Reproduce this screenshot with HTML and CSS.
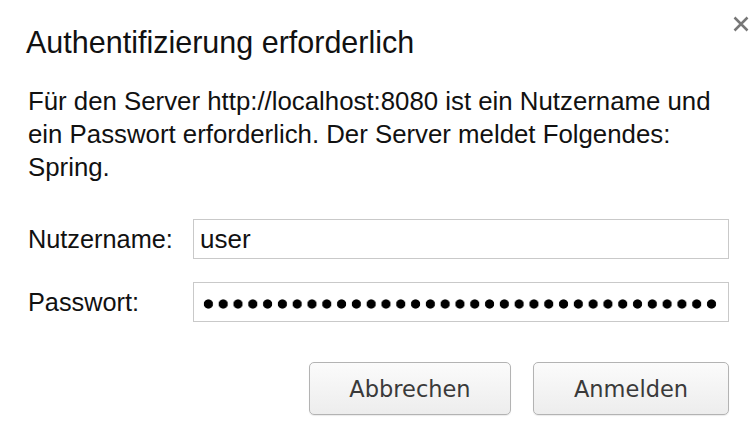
FILE: index.html
```html
<!DOCTYPE html>
<html lang="de">
<head>
<meta charset="utf-8">
<title>Authentifizierung erforderlich</title>
<link rel="stylesheet" href="styles.css">
</head>
<body>
<div class="dialog">
  <button class="close" aria-label="Schließen">
    <svg width="16" height="16" viewBox="0 0 16 16"><path d="M1.5 1.5 L14.5 14.5 M14.5 1.5 L1.5 14.5" stroke="#777777" stroke-width="2.5" fill="none"/></svg>
  </button>
  <h1 class="title">Authentifizierung erforderlich</h1>
  <p class="message">Für den Server http://localhost:8080 ist ein Nutzername und ein Passwort erforderlich. Der Server meldet Folgendes: Spring.</p>
  <div class="form">
    <div class="row">
      <label class="label">Nutzername:</label>
      <div class="field"><span class="value">user</span></div>
    </div>
    <div class="row">
      <label class="label">Passwort:</label>
      <div class="field"><span class="dots" aria-label="Passwort"></span></div>
    </div>
  </div>
  <div class="actions">
    <button class="btn btn-cancel">Abbrechen</button>
    <button class="btn btn-ok">Anmelden</button>
  </div>
</div>
</body>
</html>
```

FILE: styles.css
```css
html, body {
  margin: 0;
  padding: 0;
  background: #ffffff;
}

body {
  font-family: "Liberation Sans", Arial, Helvetica, sans-serif;
  color: #111;
}

.dialog {
  position: relative;
  width: 750px;
  height: 436px;
  box-sizing: border-box;
  padding: 25px 21px 0 26px;
  display: flex;
  flex-direction: column;
}

.close {
  position: absolute;
  top: 16px;
  left: 733px;
  width: 16px;
  height: 16px;
  padding: 0;
  margin: 0;
  border: 0;
  background: none;
  display: block;
}

.close svg {
  display: block;
}

.title {
  margin: 0;
  font-size: 30.5px;
  line-height: 34px;
  font-weight: normal;
  color: #111;
}

.message {
  margin: 26px 0 0 2px;
  font-size: 25.8px;
  line-height: 33px;
  color: #111;
}

.form {
  margin-top: 35px;
  display: flex;
  flex-direction: column;
  gap: 23px;
}

.row {
  display: flex;
  align-items: center;
}

.label {
  width: 165px;
  padding-left: 2px;
  font-size: 25.3px;
  color: #111;
}

.field {
  flex: 1;
  height: 40px;
  box-sizing: border-box;
  border: 1px solid #c9c9c9;
  background: #fff;
  display: flex;
  align-items: center;
  padding-left: 6px;
}

.value {
  font-size: 26px;
  color: #111;
}

.dots {
  display: block;
  width: 518px;
  height: 12px;
  margin-left: 1px;
  margin-top: 4px;
  background-image: radial-gradient(circle at center, #000 0, #000 4.2px, rgba(0,0,0,0) 5px);
  background-size: 14.8px 12px;
  background-repeat: repeat-x;
}

.actions {
  margin-top: 40px;
  display: flex;
  justify-content: flex-end;
  gap: 22px;
}

.btn {
  height: 53px;
  box-sizing: border-box;
  border: 1px solid #b3b3b3;
  border-radius: 5px;
  background: linear-gradient(#fbfbfb, #ededed);
  box-shadow: 0 1px 1px rgba(0,0,0,0.08);
  font-family: "DejaVu Sans", Verdana, sans-serif;
  font-size: 22.5px;
  color: #3a3a3a;
  padding: 0;
}

.btn-cancel {
  width: 202px;
}

.btn-ok {
  width: 196px;
}
```
